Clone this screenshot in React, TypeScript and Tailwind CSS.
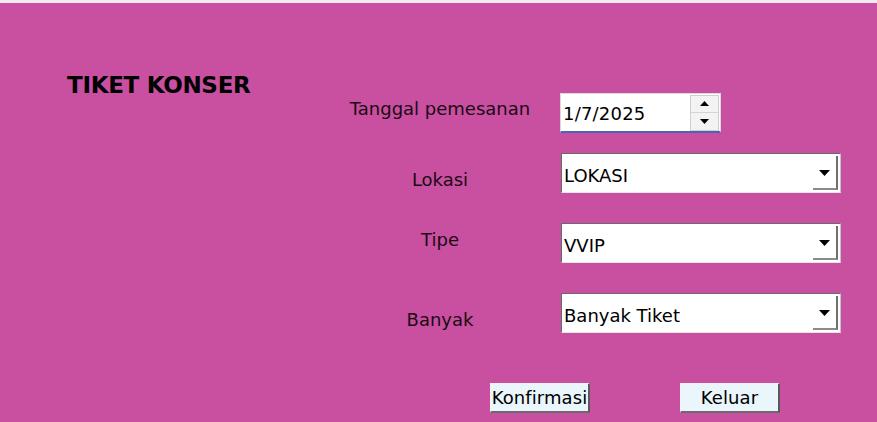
import React from "react";

const font = { fontFamily: '"DejaVu Sans", Tahoma, sans-serif' };

function DropArrow() {
  return (
    <svg width="11" height="6" viewBox="0 0 11 6" aria-hidden="true">
      <path d="M0 0h11L5.5 6z" fill="#000" />
    </svg>
  );
}

function SelectBox({ value }: { value: string }) {
  return (
    <div className="ml-px flex h-[40px] w-[280px] items-center justify-between border-t border-l border-r border-b border-t-[#6a6a6a] border-l-[#6a6a6a] border-r-[#c4c4c4] border-b-[#e6e6e6] bg-white pl-[2px] pr-[2px]">
      <span className="pt-[4px] text-[18px] text-black">{value}</span>
      <div className="flex h-[34px] w-[25px] items-center justify-center border-r-2 border-b-2 border-r-[#6f6f6f] border-b-[#8a8a8a] bg-white pt-[2px]">
        <DropArrow />
      </div>
    </div>
  );
}

function Row({
  label,
  labelTop,
  children,
}: {
  label: string;
  labelTop: string;
  children: React.ReactNode;
}) {
  return (
    <div className="flex items-start">
      <div className={`w-[220px] pr-[20px] text-center text-[18px] leading-[20px] text-[#1a0a14] ${labelTop}`}>
        {label}
      </div>
      {children}
    </div>
  );
}

export default function App() {
  return (
    <div className="flex h-[422px] w-[877px] flex-col overflow-hidden bg-[#c94fa0]" style={font}>
      <div className="h-[3px] bg-[#f1ebef]" />
      <div className="flex">
        <div className="w-[340px] pl-[67px] pt-[70px]">
          <h1 className="text-[23px] font-bold leading-[24px] tracking-[-0.3px] text-black">TIKET KONSER</h1>
        </div>

        <div className="flex flex-col pt-[90px]">
          <Row label="Tanggal pemesanan" labelTop="mt-[6px]">
            <div className="flex h-[40px] w-[161px] items-center justify-between border border-[#d9d9d9] border-b-2 border-b-[#4a66b0] bg-white pl-[2px] pr-[1px]">
              <span className="pt-[2px] text-[18px] tracking-[0.2px] text-black">1/7/2025</span>
              <div className="flex h-[36px] w-[29px] flex-col border border-[#cfcfcf] bg-[#f3f3f3]">
                <div className="flex flex-1 items-center justify-center border-b border-[#d4d4d4]">
                  <svg width="9" height="5" viewBox="0 0 9 5" aria-hidden="true">
                    <path d="M4.5 0L9 5H0z" fill="#000" />
                  </svg>
                </div>
                <div className="flex flex-1 items-center justify-center">
                  <svg width="9" height="5" viewBox="0 0 9 5" aria-hidden="true">
                    <path d="M0 0h9L4.5 5z" fill="#000" />
                  </svg>
                </div>
              </div>
            </div>
          </Row>

          <div className="mt-[20px]">
            <Row label="Lokasi" labelTop="mt-[17px]">
              <SelectBox value="LOKASI" />
            </Row>
          </div>

          <div className="mt-[30px]">
            <Row label="Tipe" labelTop="mt-[7px]">
              <SelectBox value="VVIP" />
            </Row>
          </div>

          <div className="mt-[30px]">
            <Row label="Banyak" labelTop="mt-[17px]">
              <SelectBox value="Banyak Tiket" />
            </Row>
          </div>

          <div className="ml-[150px] mt-[50px] flex gap-[90px]">
            <button
              type="button"
              className="flex h-[30px] w-[100px] items-center justify-center border-t border-l border-r-2 border-b-2 border-t-[#f4f4f4] border-l-[#f4f4f4] border-r-[#5a5a5a] border-b-[#6a6a6a] bg-[#eaf6fc] text-[18px] tracking-[0.1px] text-black"
            >
              Konfirmasi
            </button>
            <button
              type="button"
              className="flex h-[30px] w-[100px] items-center justify-center border-t border-l border-r-2 border-b-2 border-t-[#f4f4f4] border-l-[#f4f4f4] border-r-[#5a5a5a] border-b-[#6a6a6a] bg-[#eaf6fc] text-[18px] tracking-[0.1px] text-black"
            >
              Keluar
            </button>
          </div>
        </div>
      </div>
    </div>
  );
}
